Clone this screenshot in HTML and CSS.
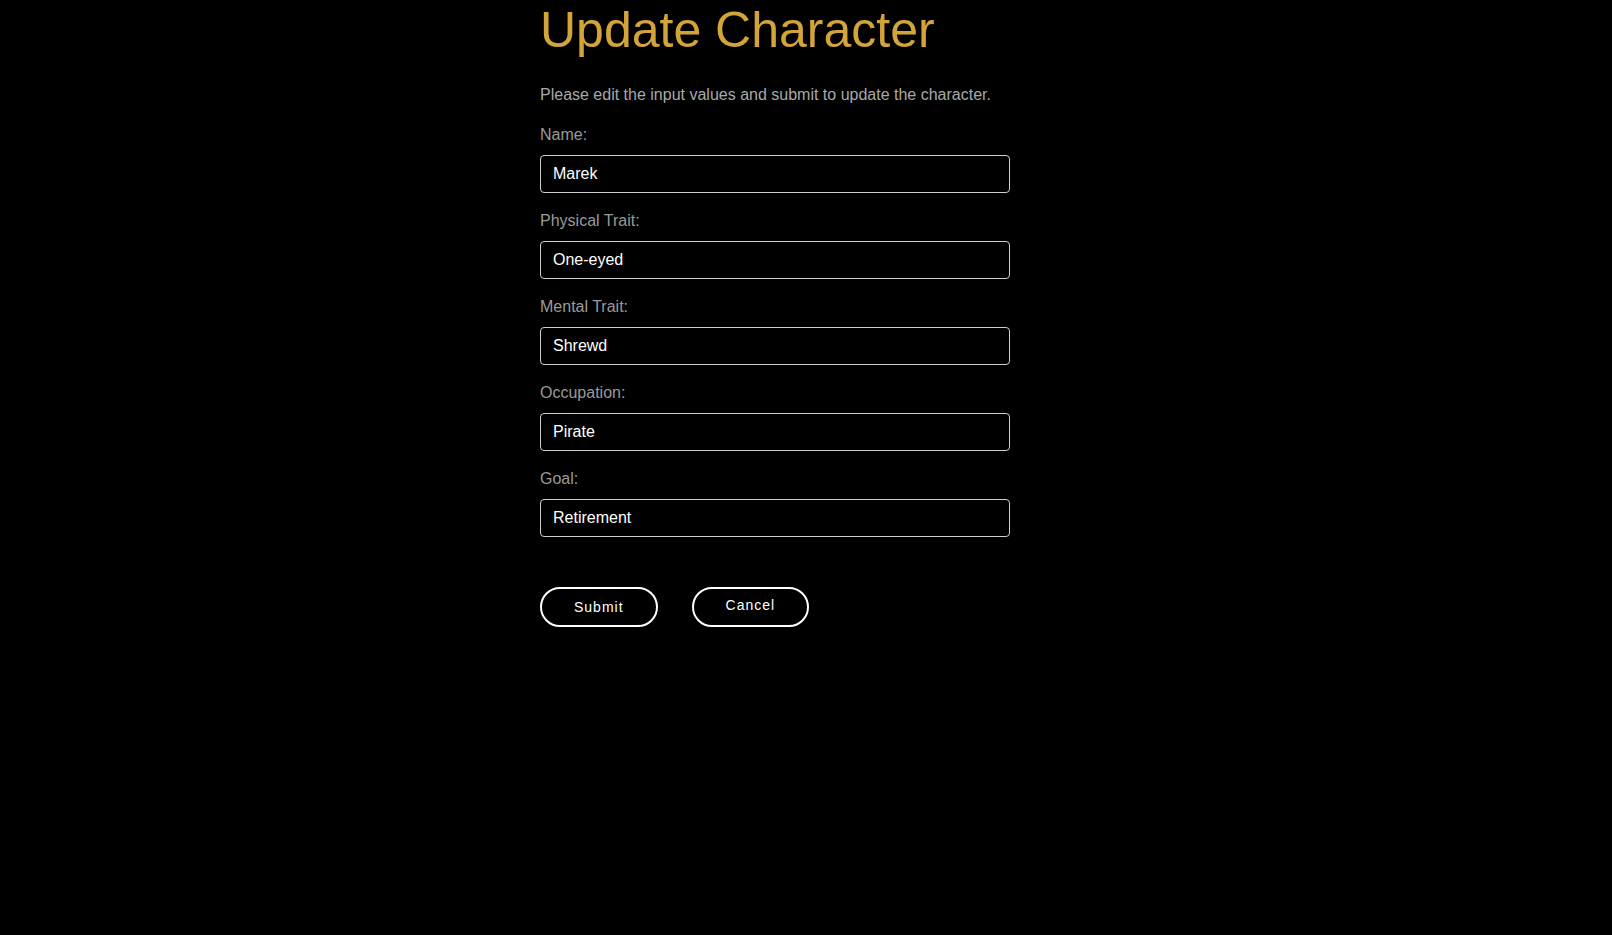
FILE: index.html
```html
<!DOCTYPE html>
<html lang="en">
<head>
<meta charset="utf-8">
<title>Update Character</title>
<link rel="stylesheet" href="styles.css">
</head>
<body>
<main class="page">
  <h1 class="title">Update Character</h1>
  <p class="intro">Please edit the input values and submit to update the character.</p>
  <form class="form">
    <div class="field">
      <label class="label" for="name">Name:</label>
      <input class="input" id="name" type="text" value="Marek">
    </div>
    <div class="field">
      <label class="label" for="physical">Physical Trait:</label>
      <input class="input" id="physical" type="text" value="One-eyed">
    </div>
    <div class="field">
      <label class="label" for="mental">Mental Trait:</label>
      <input class="input" id="mental" type="text" value="Shrewd">
    </div>
    <div class="field">
      <label class="label" for="occupation">Occupation:</label>
      <input class="input" id="occupation" type="text" value="Pirate">
    </div>
    <div class="field">
      <label class="label" for="goal">Goal:</label>
      <input class="input" id="goal" type="text" value="Retirement">
    </div>
    <div class="actions">
      <button class="btn" type="submit">Submit</button>
      <button class="btn btn-cancel" type="button">Cancel</button>
    </div>
  </form>
</main>
</body>
</html>
```

FILE: styles.css
```css
html, body {
  margin: 0;
  padding: 0;
  background: #000;
}

body {
  font-family: "Liberation Sans", Arial, sans-serif;
  color: #fff;
}

.page {
  width: 532px;
  margin: 0 auto;
  padding-top: 1px;
}

.title {
  margin: 0;
  font-size: 50px;
  line-height: 58px;
  font-weight: normal;
  color: #d3a539;
}

.intro {
  margin: 27px 0 0;
  font-size: 16px;
  line-height: 18px;
  color: #a9a9a9;
}

.form {
  margin-top: 21px;
  display: flex;
  flex-direction: column;
}

.field {
  display: flex;
  flex-direction: column;
  margin-bottom: 18px;
}

.label {
  font-size: 16px;
  line-height: 20px;
  color: #9a9a9a;
  margin-bottom: 10px;
}

.input {
  box-sizing: border-box;
  width: 470px;
  height: 38px;
  margin: 0;
  padding: 0 12px;
  background: #000;
  color: #fff;
  border: 1px solid #cfcfcf;
  border-radius: 4px;
  font-family: "Liberation Sans", Arial, sans-serif;
  font-size: 16px;
  outline: none;
}

.actions {
  display: flex;
  gap: 34px;
  margin-top: 32px;
}

.btn {
  box-sizing: border-box;
  height: 40px;
  padding: 0 32px;
  background: #000;
  color: #fff;
  border: 2px solid #fff;
  border-radius: 20px;
  font-family: "Liberation Sans", Arial, sans-serif;
  font-size: 14px;
  font-weight: normal;
  letter-spacing: 1px;
  cursor: pointer;
}

.btn-cancel {
  padding-bottom: 4px;
}
```
